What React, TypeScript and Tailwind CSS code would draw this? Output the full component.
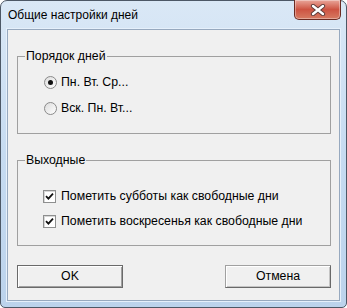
import React from 'react'

const font = { fontFamily: '"Liberation Sans", "Noto Sans", sans-serif' }

function CloseGlyph() {
  return (
    <svg width="16" height="12" viewBox="0 0 16 12">
      <path d="M3 2 L13 10 M13 2 L3 10" stroke="#5a3a38" strokeWidth="4.2" strokeLinecap="round" />
      <path d="M3 2 L13 10 M13 2 L3 10" stroke="#ffffff" strokeWidth="2.4" strokeLinecap="round" />
    </svg>
  )
}

function Radio({ checked }: { checked?: boolean }) {
  return (
    <span className="flex h-[13px] w-[13px] items-center justify-center rounded-full border border-[#8a8a8a] bg-gradient-to-br from-[#dcdcdc] to-[#ffffff]">
      {checked && <span className="h-[5px] w-[5px] rounded-full bg-[#111]" />}
    </span>
  )
}

function Check() {
  return (
    <span className="flex h-[13px] w-[13px] items-center justify-center border border-[#8e8f8f] bg-white shadow-[inset_1px_1px_0_#d8d8d8]">
      <svg width="9" height="9" viewBox="0 0 9 9">
        <path d="M1 4.2 L3.4 6.6 L8 1.6" fill="none" stroke="#111" strokeWidth="1.8" />
      </svg>
    </span>
  )
}

function Button({ label, primary }: { label: string; primary?: boolean }) {
  return (
    <button
      type="button"
      className={
        primary
          ? 'h-[23px] w-[106px] border border-[#6a6a6a] bg-[#f0f0f0] text-[12.3px] text-black shadow-[inset_1px_1px_0_#ffffff,inset_-1px_-1px_0_#a0a0a0]'
          : 'h-[23px] w-[106px] border border-[#a0a0a0] border-b-[#696969] border-r-[#696969] bg-[#f0f0f0] text-[12.3px] text-black shadow-[inset_1px_1px_0_#ffffff,inset_-1px_-1px_0_#c4c4c4]'
      }
    >
      {label}
    </button>
  )
}

export default function App() {
  return (
    <div className="h-[308px] w-[347px] bg-white" style={font}>
      <div className="flex h-full w-full flex-col rounded-t-[7px] rounded-b-[5px] border border-[#4d5866] bg-gradient-to-b from-[#dae8f6] via-[#c6dbf1] to-[#bcd3ec] px-[6px] pb-[6px]">
        <div className="flex h-[28px] shrink-0 items-start justify-between">
          <span className="pl-[1px] pt-[7px] text-[12px] leading-[15px] text-black">
            Общие настройки дней
          </span>
          <div className="-mt-[1px] mr-[-1px] flex h-[20px] w-[47px] items-center justify-center rounded-b-[5px] border border-t-0 border-[#6b2a22] bg-gradient-to-b from-[#e8a59a] via-[#cd5342] to-[#d67a62] shadow-[inset_0_0_0_1px_rgba(255,255,255,0.35)]">
            <CloseGlyph />
          </div>
        </div>
        <div className="flex flex-1 flex-col border border-[#97a9bf] bg-[#f0f0f0] pl-[9px] pr-[8px] pt-[19px] text-[12.3px] text-black shadow-[0_0_0_1px_#e6f0fb]">
          <fieldset className="border border-[#a0a0a0] pb-[18px]">
            <legend className="ml-[7px] px-[1px] leading-[14px]">Порядок дней</legend>
            <div className="flex flex-col gap-[12px] pl-[26px] pt-[12px]">
              <div className="flex h-[14px] items-center gap-[4px]">
                <Radio checked />
                <span className="leading-[14px]">Пн. Вт. Ср...</span>
              </div>
              <div className="flex h-[14px] items-center gap-[4px]">
                <Radio />
                <span className="leading-[14px]">Вск. Пн. Вт...</span>
              </div>
            </div>
          </fieldset>
          <fieldset className="mt-[19px] border border-[#a0a0a0] pb-[17px]">
            <legend className="ml-[7px] px-[1px] leading-[14px]">Выходные</legend>
            <div className="flex flex-col gap-[11px] pl-[25px] pt-[22px]">
              <div className="flex h-[14px] items-center gap-[5px]">
                <Check />
                <span className="leading-[14px]">Пометить субботы как свободные дни</span>
              </div>
              <div className="flex h-[14px] items-center gap-[5px]">
                <Check />
                <span className="leading-[14px]">Пометить воскресенья как свободные дни</span>
              </div>
            </div>
          </fieldset>
          <div className="mt-[19px] flex justify-between">
            <Button label="OK" primary />
            <Button label="Отмена" />
          </div>
        </div>
      </div>
    </div>
  )
}
